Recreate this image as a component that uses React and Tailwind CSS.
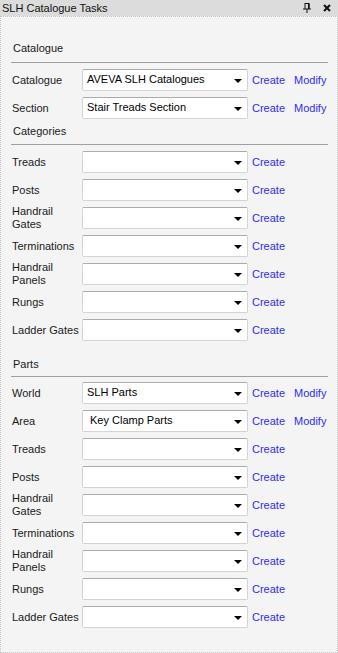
import React from 'react';

const CATALOGUE_ROWS = [
  { label: 'Catalogue', value: 'AVEVA SLH Catalogues', modify: true },
  { label: 'Section', value: 'Stair Treads Section', modify: true },
];

const CATEGORY_ROWS = [
  { label: 'Treads' },
  { label: 'Posts' },
  { label: ['Handrail', 'Gates'] },
  { label: 'Terminations' },
  { label: ['Handrail', 'Panels'] },
  { label: 'Rungs' },
  { label: 'Ladder Gates' },
];

const PART_ROWS = [
  { label: 'World', value: 'SLH Parts', modify: true },
  { label: 'Area', value: 'Key Clamp Parts', modify: true, indent: true },
  ...CATEGORY_ROWS,
];

function PinIcon() {
  return (
    <svg width="8" height="10" viewBox="0 0 8 10" className="block">
      <path d="M2 0.5h4v5" fill="none" stroke="#111" strokeWidth="1" />
      <rect x="5" y="0" width="1.5" height="6" fill="#111" />
      <path d="M2 0v6" stroke="#111" strokeWidth="1" />
      <rect x="0" y="5.5" width="8" height="1" fill="#111" />
      <rect x="3.5" y="6" width="1" height="4" fill="#111" />
    </svg>
  );
}

function CloseIcon() {
  return (
    <svg width="8" height="8" viewBox="0 0 8 8" className="block">
      <path d="M1 1L7 7M7 1L1 7" stroke="#111" strokeWidth="2" />
    </svg>
  );
}

function Combo({ value, indent }) {
  return (
    <div className="relative h-[22px] w-[166px] shrink-0 bg-white border border-[#d4d4d4] border-t-[#ababab] rounded-[2px] flex items-center">
      <span className={`${indent ? 'pl-[7px]' : 'pl-[4px]'} pb-[2px] text-[11px] leading-[14px] text-black`}>
        {value}
      </span>
      {/* dropdown arrow */}
      <svg width="8" height="4" viewBox="0 0 8 4" className="absolute right-[5px] top-[9px]">
        <path d="M0 0h8L4 4z" fill="#000" />
      </svg>
    </div>
  );
}

function Row({ row }) {
  const lines = Array.isArray(row.label) ? row.label : [row.label];
  return (
    <div className="flex items-center h-[22px]">
      <div className="w-[70px] shrink-0 text-[11px] leading-[13px] text-[#1a1a1a]">
        {lines.map(l => (
          <div key={l}>{l}</div>
        ))}
      </div>
      <Combo value={row.value} indent={row.indent} />
      <span className="ml-[4px] text-[11px] text-[#2e2ef2]">Create</span>
      {row.modify && <span className="ml-[9px] text-[11px] text-[#2e2ef2]">Modify</span>}
    </div>
  );
}

function Header({ label, className }) {
  return (
    <div className={className}>
      <div className="text-[11px] leading-[14px] text-[#1a1a1a] pl-[2px]">{label}</div>
    </div>
  );
}

export default function App() {
  return (
    <div
      className="w-[338px] h-[653px] flex flex-col bg-[#f4f4f4] overflow-hidden"
      style={{ fontFamily: '"Liberation Sans", Arial, sans-serif' }}
    >
      {/* Title bar */}
      <div className="h-[16px] shrink-0 bg-[#dcdcdc] flex items-center pl-[2px] pr-[7px]">
        <span className="text-[11px] leading-[14px] text-[#111]">SLH Catalogue Tasks</span>
        <div className="ml-auto flex items-center gap-[12px]">
          <PinIcon />
          <CloseIcon />
        </div>
      </div>

      <div className="flex-1 border border-dotted border-[#c4c4c4] px-[10px]">
        <Header label="Catalogue" className="pt-[24px]" />
        <div className="mt-[7px] h-px bg-[#a0a0a0] w-[317px]" />
        <div className="mt-[6px] flex flex-col gap-[6px] pl-[1px]">
          {CATALOGUE_ROWS.map(r => <Row key={r.label} row={r} />)}
        </div>

        <Header label="Categories" className="mt-[5px]" />
        <div className="mt-[6px] h-px bg-[#a0a0a0] w-[317px]" />
        <div className="mt-[6px] flex flex-col gap-[6px] pl-[1px]">
          {CATEGORY_ROWS.map(r => <Row key={String(r.label)} row={r} />)}
        </div>

        <Header label="Parts" className="mt-[16px]" />
        <div className="mt-[5px] h-px bg-[#a0a0a0] w-[317px]" />
        <div className="mt-[5px] flex flex-col gap-[6px] pl-[1px]">
          {PART_ROWS.map(r => <Row key={String(r.label)} row={r} />)}
        </div>
      </div>
    </div>
  );
}
